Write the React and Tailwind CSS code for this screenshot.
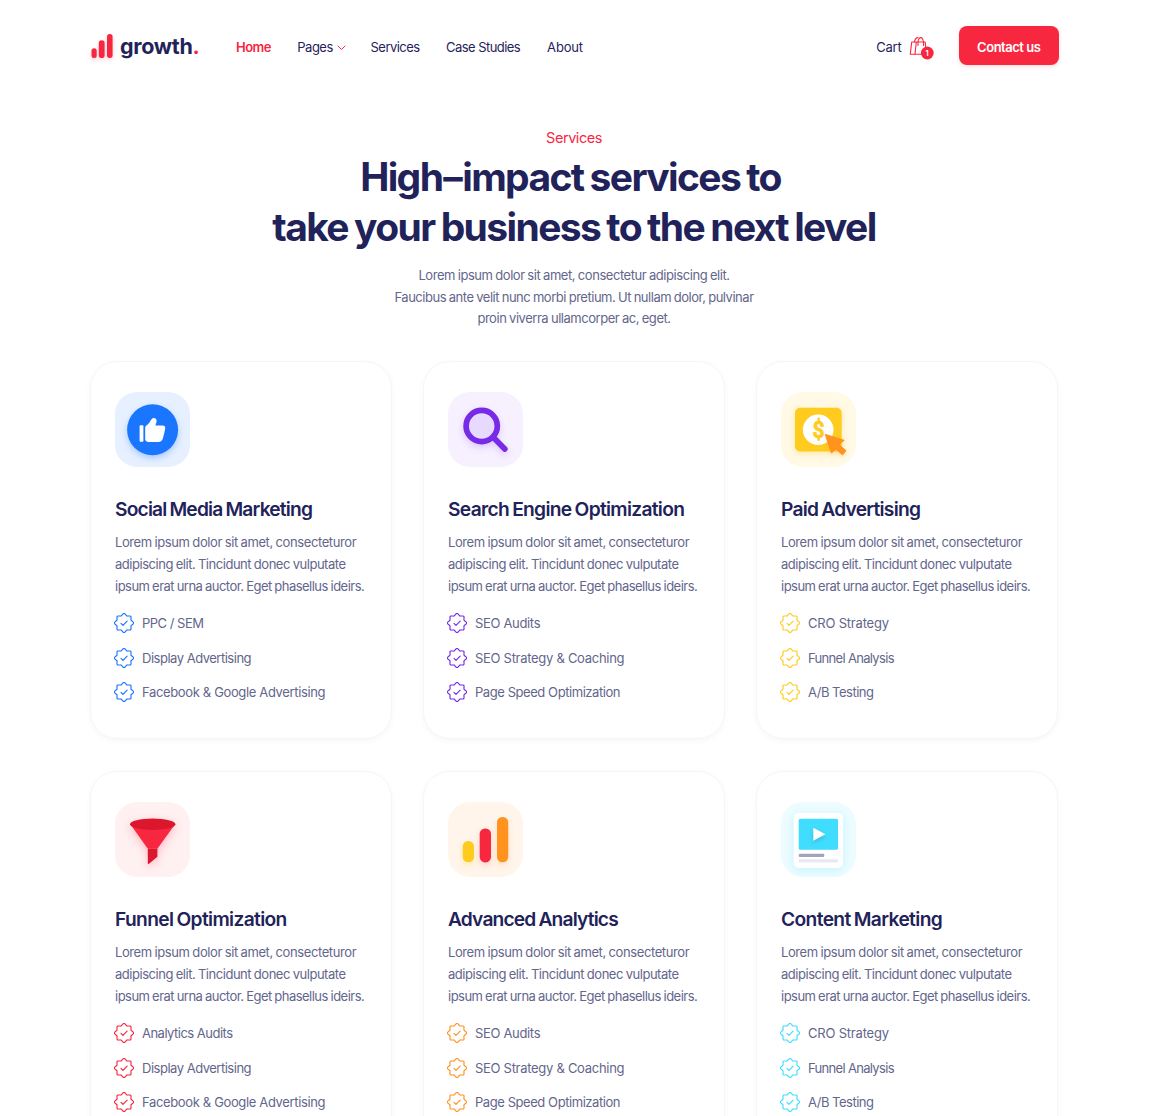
import React from "react";

const NAVY = "#1f235a";

const body = [
  ["Lorem ipsum dolor sit amet, consecteturor", "tracking-[-0.4px]"],
  ["adipiscing elit. Tincidunt donec vulputate", "tracking-[-0.463px]"],
  ["ipsum erat urna auctor. Eget phasellus ideirs.", "tracking-[-0.52px]"],
];

const items = {
  ppc: ["PPC / SEM", "tracking-[-0.5px]"],
  display: ["Display Advertising", "tracking-[-0.49px]"],
  facebook: ["Facebook & Google Advertising", "tracking-[-0.355px]"],
  seo: ["SEO Audits", "tracking-[-0.335px]"],
  coaching: ["SEO Strategy & Coaching", "tracking-[-0.287px]"],
  speed: ["Page Speed Optimization", "tracking-[-0.433px]"],
  cro: ["CRO Strategy", "tracking-[-0.2px]"],
  funnel: ["Funnel Analysis", "tracking-[-0.68px]"],
  ab: ["A/B Testing", "tracking-[-0.5px]"],
  analytics: ["Analytics Audits", "tracking-[-0.514px]"],
};

const LikeIcon = () => (
  <svg viewBox="0 0 75 75" className="size-full">
    <circle cx="37.6" cy="37.7" r="25.5" fill="#1a75ff" className="drop-shadow-[0_3px_3px_rgba(26,117,255,0.3)]" />
    <g fill="#fff">
      <rect x="24.6" y="33.2" width="3.8" height="16.6" rx="0.8" />
      <path d="M30.2 35.700c0-1 .5-1.600 1.300-2.200 2.600-1.900 3.500-4.200 5.200-6.500 1.500-2 5.100-1 4.900 1.900-.1 1.600-.8 3-1.200 4.600h7.300c1.800 0 2.800 1.300 2.500 3.100-.6 3.400-1.300 6.500-2.300 9.700-.8 2.600-2 3.700-4.500 3.700H35c-2.700 0-4.800-.9-4.800-2.600z" />
    </g>
  </svg>
);

const SearchIcon = () => (
  <svg viewBox="0 0 75 75" className="size-full">
    <g stroke="#772be6" strokeWidth="5.7" strokeLinecap="round" className="drop-shadow-[0_3px_3px_rgba(119,43,230,0.2)]">
      <path d="M45.500 45.500 56.800 57" />
      <circle cx="33.7" cy="34" r="15.600" fill="#e8daff" />
    </g>
  </svg>
);

const PaidIcon = () => (
  <svg viewBox="0 0 75 75" className="size-full">
    <rect x="14" y="15.700" width="46.700" height="43.700" rx="5" fill="#ffcb1f" className="drop-shadow-[0_2px_3px_rgba(255,203,31,0.3)]" />
    <circle cx="37.200" cy="37.700" r="15.300" fill="#fff" />
    <text x="31.500" y="46.300" fontSize="24.500" fontWeight="700" fill="#ffcb1f" stroke="#ffcb1f" strokeWidth="0.7" className="font-['Roboto',sans-serif]" textLength="12" lengthAdjust="spacingAndGlyphs">$</text>
    <path d="M44.300 42.400 63.200 48.300 57.900 52.500 65 58.700 61.600 62.900 54.800 57.100 50.400 60.900Z" fill="#ff931e" stroke="#ff931e" strokeWidth="1" strokeLinejoin="round" className="drop-shadow-[0_2px_2px_rgba(255,147,30,0.2)]" />
  </svg>
);

const FunnelIcon = () => (
  <svg viewBox="0 0 75 75" className="size-full">
    <g className="drop-shadow-[0_3px_4px_rgba(247,39,63,0.28)]">
      <path d="M15.200 22 32.800 46.800H42.400L60.200 22Z" fill="#f7273f" />
      <path d="M32.800 46.800H42.400V54.800L34 61.800Q32.800 62.500 32.800 61Z" fill="#dc172d" />
      <ellipse cx="37.700" cy="22.300" rx="22.700" ry="5.700" fill="#dc172d" />
    </g>
  </svg>
);

const AnalyticsIcon = () => (
  <svg viewBox="0 0 75 75" className="size-full">
    <rect x="14.700" y="39" width="11.300" height="21.300" rx="5.300" fill="#ffcb1f" className="drop-shadow-[0_3px_3px_rgba(255,203,31,0.25)]" />
    <rect x="31.700" y="26.400" width="11.300" height="34" rx="5.300" fill="#f7273f" className="drop-shadow-[0_3px_3px_rgba(247,39,63,0.18)]" />
    <rect x="49" y="14.900" width="11.200" height="45.400" rx="5.300" fill="#ff931e" className="drop-shadow-[0_3px_3px_rgba(255,147,30,0.2)]" />
  </svg>
);

const ContentIcon = () => (
  <svg viewBox="0 0 75 75" className="size-full">
    <rect x="12.700" y="11" width="49.300" height="55" rx="5" fill="#fff" className="drop-shadow-[0_2px_4px_rgba(64,221,255,0.25)]" />
    <rect x="17.700" y="16.800" width="39.300" height="31" rx="1.500" fill="#40ddff" />
    <path d="M32.300 25.800 44.500 32.200 32.300 38.700Z" fill="#fff" className="drop-shadow-[0_2px_2px_rgba(31,35,90,0.2)]" />
    <rect x="17.700" y="51.700" width="25.600" height="3.300" rx="1.300" fill="#a3a3bd" />
    <rect x="17.700" y="57.200" width="39.300" height="3.300" rx="1.300" fill="#e9e9f1" />
  </svg>
);

/* Eight-lobed seal outline with softened tips. */
const sealPath = (() => {
  const pts = Array.from({ length: 16 }, (_, i) => {
    const r = i % 2 ? 7.5 : i % 4 ? 10 : 10.3;
    const a = (i * Math.PI) / 8 - Math.PI / 2;
    return [10 + r * Math.cos(a), 10 + r * Math.sin(a)];
  });
  const mix = (p, q, t) => `${(p[0] + (q[0] - p[0]) * t).toFixed(2)} ${(p[1] + (q[1] - p[1]) * t).toFixed(2)}`;
  return (
    pts
      .map((p, i) => {
        const prev = pts[(i + 15) % 16];
        const next = pts[(i + 1) % 16];
        const t = i % 2 ? 0.12 : 0.32;
        return `${i ? "L" : "M"}${mix(p, prev, t)}Q${p[0].toFixed(2)} ${p[1].toFixed(2)} ${mix(p, next, t)}`;
      })
      .join("") + "Z"
  );
})();

const Seal = () => (
  <svg viewBox="0 0 20 20" fill="none" stroke="currentColor" strokeWidth="1.15" strokeLinecap="round" strokeLinejoin="round" className="size-5 shrink-0">
    <path d={sealPath} />
    <path d="M7 10.300 9 12.300 13.100 8.200" />
  </svg>
);

const cards = [
  { title: "Social Media Marketing", track: "tracking-[-0.82px]", tile: "bg-[#e6f0ff]", accent: "text-[#1a75ff]", Icon: LikeIcon, list: ["ppc", "display", "facebook"] },
  { title: "Search Engine Optimization", track: "tracking-[-0.692px]", tile: "bg-[#f6f0ff]", accent: "text-[#772be6]", Icon: SearchIcon, list: ["seo", "coaching", "speed"] },
  { title: "Paid Advertising", track: "tracking-[-0.75px]", tile: "bg-[#fff9e5]", accent: "text-[#ffcb1f]", Icon: PaidIcon, list: ["cro", "funnel", "ab"] },
  { title: "Funnel Optimization", track: "tracking-[-0.65px]", tile: "bg-[#fff0f1]", accent: "text-[#f7273f]", Icon: FunnelIcon, list: ["analytics", "display", "facebook"] },
  { title: "Advanced Analytics", track: "tracking-[-0.84px]", tile: "bg-[#fff5eb]", accent: "text-[#ff931e]", Icon: AnalyticsIcon, list: ["seo", "coaching", "speed"] },
  { title: "Content Marketing", track: "tracking-[-0.63px]", tile: "bg-[#edfcff]", accent: "text-[#40ddff]", Icon: ContentIcon, list: ["cro", "funnel", "ab"] },
];

function Card({ title, track, tile, accent, Icon, list }) {
  return (
    <article className="h-[378px] rounded-[27px] border border-[#f5f6fa] bg-white px-6 pt-[30px] shadow-[0_2px_6px_rgba(20,20,43,0.035)]">
      <div className={`size-[75px] rounded-[22px] ${tile}`}>
        <Icon />
      </div>
      <h2 className={`mt-7 whitespace-nowrap text-[19.200px] font-semibold leading-7 [word-spacing:-1px] ${track}`}>{title}</h2>
      <p className="mt-[9.100px] text-[13px] leading-[21.700px] text-[#63668c]">
        {body.map(([text, cls]) => (
          <span key={text} className={`block whitespace-nowrap ${cls}`}>{text}</span>
        ))}
      </p>
      <ul className="-ml-px mt-[16.100px] flex flex-col gap-[14.400px]">
        {list.map((k) => (
          <li key={k} className={`flex h-5 items-center gap-2 ${accent}`}>
            <Seal />
            <span className={`whitespace-nowrap text-[13px] leading-5 text-[#63668c] [word-spacing:0px] ${items[k][1]}`}>{items[k][0]}</span>
          </li>
        ))}
      </ul>
    </article>
  );
}

function Header() {
  return (
    <header className="ml-px flex h-[39px] w-[967.500px] items-center text-[13px] leading-5">
      <a className="flex h-[39px] w-[145px] items-center">
        <svg viewBox="0 0 24 28" className="mt-[3px] h-7 w-6 shrink-0 drop-shadow-[0_2px_2px_rgba(247,39,63,0.22)]" fill="#f7273f">
          <rect x="0.500" y="15.300" width="5.200" height="9.700" rx="2.500" />
          <rect x="7.800" y="7.300" width="5.800" height="17.700" rx="2.800" />
          <rect x="16" y="1" width="5.600" height="24" rx="2.700" />
        </svg>
        <span className="ml-[5px] mt-px text-[21.500px] font-bold leading-7 tracking-[-0.3px]">
          growth<span className="text-[#f7273f]">.</span>
        </span>
      </a>
      <nav className="flex flex-1 items-center whitespace-nowrap pt-[2px] [word-spacing:0px]">
        <a className="w-[61.300px] font-semibold tracking-[-0.5px] text-[#f7273f]">Home</a>
        <a className="flex w-[73.300px] items-center tracking-[-0.5px]">
          Pages
          <svg viewBox="0 0 9 6" className="ml-[4px] mt-[2px] h-[6px] w-[9px]" fill="none" stroke="#f7273f" strokeLinecap="round" strokeLinejoin="round">
            <path d="M1 1 4.500 4.500 8 1" />
          </svg>
        </a>
        <a className="w-[75.500px] tracking-[-0.56px]">Services</a>
        <a className="w-[101px] tracking-[-0.56px]">Case Studies</a>
        <a className="tracking-[-0.16px]">About</a>
      </nav>
      <a className="flex items-center pt-[2px]">
        <span className="tracking-[-0.2px]">Cart</span>
        <svg viewBox="0 0 26 24" className="ml-[7.500px] mt-[3px] h-6 w-[26px]" fill="none" stroke="#f7273f" strokeWidth="1.100" strokeLinecap="round" strokeLinejoin="round">
          <path d="M6 18.200H1.300L2.700 6H16.200L17.400 18.200H6L7.300 6" />
          <path d="M9 9.500C8.600 4.500 9.700 1.600 11.800 1.600S14.600 4.500 14.600 9.500" />
          <path d="M5.500 6C5.900 3.200 7 1.600 8.900 1.600" />
          <circle cx="18.300" cy="17" r="6.400" fill="#f7273f" stroke="none" />
          <text x="18.200" y="19.700" fontSize="7.500" fontWeight="600" textAnchor="middle" fill="#fff" stroke="none">1</text>
        </svg>
      </a>
      <a className="ml-[24px] flex h-[39px] w-[99.500px] items-center justify-center rounded-[8px] bg-[#f7273f] pt-[2px] font-semibold tracking-[-0.48px] text-white shadow-[0_2px_4px_rgba(247,39,63,0.15)] [word-spacing:0px]">Contact us</a>
    </header>
  );
}

export default function App() {
  return (
    <div className="h-[1116px] overflow-hidden bg-white font-['Inter',sans-serif] [word-spacing:-0.5px]" style={{ color: NAVY }}>
      <div className="ml-[90px] w-[968px] pt-[26px]">
        <Header />
        <section className="mt-[61px] text-center">
          <div className="text-[14.500px] leading-6 tracking-[-0.45px] text-[#f7273f]">Services</div>
          <h1 className="mt-[2px] whitespace-nowrap text-[39px] font-bold leading-[50px] [word-spacing:-1.5px]">
            <span className="block pr-[7px] tracking-[-1.62px]">High<span className="mx-px">–</span>impact services to</span>
            <span className="block tracking-[-1.61px]">take your business to the next level</span>
          </h1>
          <p className="mt-[13px] whitespace-nowrap text-[13px] leading-[21.700px] text-[#63668c]">
            <span className="block tracking-[-0.44px]">Lorem ipsum dolor sit amet, consectetur adipiscing elit.</span>
            <span className="block tracking-[-0.475px]">Faucibus ante velit nunc morbi pretium. Ut nullam dolor, pulvinar</span>
            <span className="block tracking-[-0.46px]">proin viverra ullamcorper ac, eget.</span>
          </p>
        </section>
        <main className="mt-[30.900px] grid grid-cols-3 gap-x-[31px] gap-y-[32px]">
          {cards.map((c) => (
            <Card key={c.title} {...c} />
          ))}
        </main>
      </div>
    </div>
  );
}
